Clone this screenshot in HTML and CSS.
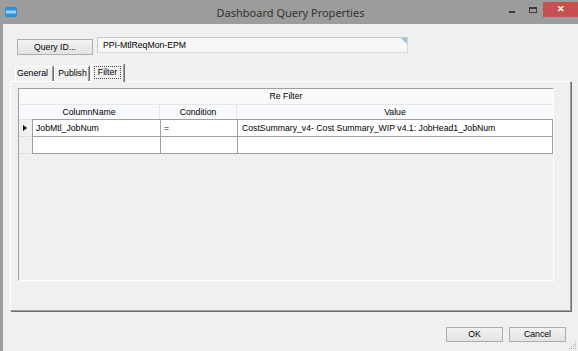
FILE: index.html
```html
<!DOCTYPE html>
<html>
<head>
  <title>Dashboard Query Properties</title>
  <link rel="stylesheet" href="styles.css">
</head>
<body>
  <div class="window">
    <div class="titlebar">
      <svg class="app-icon" width="12" height="10" viewBox="0 0 12 10">
        <rect x="0" y="0" width="12" height="10" rx="2.5" fill="#2b8fd9"/>
        <rect x="1" y="3.5" width="10" height="3" fill="#9ad6f7"/>
      </svg>
      <div class="title">Dashboard Query Properties</div>
      <div class="controls">
        <span class="btn-min"></span>
        <span class="btn-max"></span>
        <span class="btn-close">&#10005;</span>
      </div>
    </div>

    <div class="client">
      <div class="query-row">
        <div class="button query-btn">Query ID...</div>
        <div class="textbox">PPI-MtlReqMon-EPM<span class="corner"></span></div>
      </div>

      <div class="tabs">
        <div class="tab tab-general">General</div>
        <div class="tab tab-publish">Publish</div>
        <div class="tab selected"><span class="focus">Filter</span></div>
      </div>

      <div class="panel">
        <div class="dgv">
          <div class="band">Re Filter</div>
          <div class="row head">
            <div class="hcell wide">ColumnName</div>
            <div class="hcell">Condition</div>
            <div class="hcell">Value</div>
          </div>
          <div class="row data first">
            <div class="rh"><span class="arrow"></span></div>
            <div class="cell">JobMtl_JobNum</div>
            <div class="cell">=</div>
            <div class="cell">CostSummary_v4- Cost Summary_WIP v4.1: JobHead1_JobNum</div>
          </div>
          <div class="row data">
            <div class="rh"></div>
            <div class="cell"></div>
            <div class="cell"></div>
            <div class="cell"></div>
          </div>
        </div>
      </div>

      <div class="footer">
        <div class="button dlg-btn">OK</div>
        <div class="button dlg-btn">Cancel</div>
      </div>

      <svg class="grip" width="8" height="8" viewBox="0 0 8 8">
        <rect x="6" y="0" width="1" height="1" fill="#b0b0b0"/>
        <rect x="4" y="2" width="1" height="1" fill="#b0b0b0"/>
        <rect x="6" y="2" width="1" height="1" fill="#b0b0b0"/>
        <rect x="2" y="4" width="1" height="1" fill="#b0b0b0"/>
        <rect x="4" y="4" width="1" height="1" fill="#b0b0b0"/>
        <rect x="6" y="4" width="1" height="1" fill="#b0b0b0"/>
        <rect x="0" y="6" width="1" height="1" fill="#b0b0b0"/>
        <rect x="2" y="6" width="1" height="1" fill="#b0b0b0"/>
        <rect x="4" y="6" width="1" height="1" fill="#b0b0b0"/>
        <rect x="6" y="6" width="1" height="1" fill="#b0b0b0"/>
      </svg>
    </div>
  </div>
</body>
</html>
```

FILE: styles.css
```css
* {
  box-sizing: border-box;
}

body {
  margin: 0;
  width: 578px;
  height: 351px;
  overflow: hidden;
  background-color: #f0f0f0;
  font-family: "Liberation Sans", Arial, sans-serif;
  font-size: 8.7px;
  color: #000;
}

.window {
  display: flex;
  flex-direction: column;
  height: 351px;
}

/* title bar */
.titlebar {
  position: relative;
  height: 24px;
  background-color: #9c9c9c;
  display: flex;
  align-items: center;
  justify-content: center;
}

.app-icon {
  position: absolute;
  left: 5px;
  top: 7px;
}

.title {
  font-family: "Noto Sans", "Open Sans", sans-serif;
  font-size: 11px;
  color: #333;
  margin-top: 1px;
  margin-left: 3px;
}

.controls {
  position: absolute;
  right: 0;
  top: 2px;
  display: flex;
  align-items: flex-start;
}

.btn-min {
  width: 6px;
  height: 2px;
  background-color: #3a3a3a;
  margin-top: 9px;
  margin-right: 14px;
}

.btn-max {
  width: 8px;
  height: 6px;
  border: 1px solid #3a3a3a;
  border-top-width: 2px;
  margin-top: 5px;
  margin-right: 6px;
}

.btn-close {
  width: 35px;
  height: 15px;
  background-color: #c75050;
  color: #fff;
  font-size: 9px;
  font-weight: bold;
  text-align: center;
  line-height: 15px;
}

/* client area */
.client {
  position: relative;
  flex: 1;
  border-left: 3px solid #9c9c9c;
  display: flex;
  flex-direction: column;
}

.query-row {
  display: flex;
  align-items: flex-start;
  margin: 13px 0 0 14px;
}

.button {
  background: linear-gradient(#f2f2f2, #e3e3e3);
  border: 1px solid #adadad;
  text-align: center;
}

.query-btn {
  width: 76px;
  height: 16px;
  line-height: 14px;
  margin-top: 2px;
}

.textbox {
  position: relative;
  width: 311px;
  height: 16px;
  margin-left: 4px;
  padding-left: 5px;
  line-height: 14px;
  background-color: #f7f7f7;
  border: 1px solid #c9c9c9;
  border-right-color: #dadada;
  border-bottom-color: #dadada;
}

.corner {
  position: absolute;
  right: 0;
  top: 0;
  width: 0;
  height: 0;
  border-top: 6px solid #9fbde3;
  border-left: 6px solid transparent;
}

/* tabs */
.tabs {
  display: flex;
  align-items: flex-end;
  height: 17px;
  margin: 9px 0 0 12px;
  position: relative;
  z-index: 1;
}

.tab {
  height: 15px;
  line-height: 13px;
  text-align: center;
  border: 1px solid #fff;
  border-bottom: none;
  border-right-color: #a0a0a0;
  box-shadow: 1px 0 0 #6f6f6f;
}

.tab-general {
  width: 38px;
  margin-right: 1px;
  padding-right: 3px;
}

.tab-publish {
  width: 35px;
  margin-right: 2px;
  padding-left: 2px;
}

.tab.selected {
  width: 33px;
  height: 18px;
  margin-bottom: -1px;
  padding: 1px 2px 0 2px;
  background-color: #f0f0f0;
}

.focus {
  display: block;
  border: 1px dotted #505050;
  line-height: 11px;
}

/* tab page */
.panel {
  width: 561px;
  height: 230px;
  margin-left: 7px;
  padding: 6px 0 0 7px;
  border: 1px solid #fff;
  border-right-color: #a0a0a0;
  border-bottom-color: #a0a0a0;
  box-shadow: 1px 1px 0 #6f6f6f;
}

.dgv {
  width: 536px;
  height: 193px;
  border: 1px solid #a0a0a0;
  border-right-color: #fff;
  border-bottom-color: #fff;
}

.band {
  height: 15px;
  line-height: 15px;
  text-align: center;
  background-color: #f9f9f9;
}

.row {
  display: grid;
  grid-template-columns: 13px 128px 77px 316px;
}

.head {
  height: 15px;
  border-top: 1px solid #e6e6e6;
  background-color: #f8fafd;
}

.hcell {
  text-align: center;
  line-height: 14px;
  border-right: 1px solid #e3e3e3;
}

.hcell.wide {
  grid-column: span 2;
}

.hcell:last-child {
  border-right: none;
}

.rh {
  height: 17px;
  border-bottom: 1px solid #e0e0e0;
  position: relative;
}

.first .rh {
  height: 18px;
  border-top: 1px solid #e0e0e0;
}

.arrow {
  position: absolute;
  left: 4px;
  top: 5px;
  width: 0;
  height: 0;
  border-left: 4px solid #000;
  border-top: 3px solid transparent;
  border-bottom: 3px solid transparent;
}

.cell {
  height: 17px;
  background-color: #fff;
  border-left: 1px solid #a0a0a0;
  border-bottom: 1px solid #a0a0a0;
  padding-left: 3px;
  line-height: 16px;
  white-space: nowrap;
}

.first .cell {
  height: 18px;
  border-top: 1px solid #a0a0a0;
}

.cell:last-child {
  border-right: 1px solid #a0a0a0;
  padding-left: 4px;
}

/* dialog buttons */
.footer {
  display: flex;
  justify-content: flex-end;
  gap: 6px;
  margin-top: 16px;
  padding-right: 12px;
}

.dlg-btn {
  width: 57px;
  height: 15px;
  line-height: 13px;
}

.grip {
  position: absolute;
  right: 1px;
  bottom: 1px;
}
```
